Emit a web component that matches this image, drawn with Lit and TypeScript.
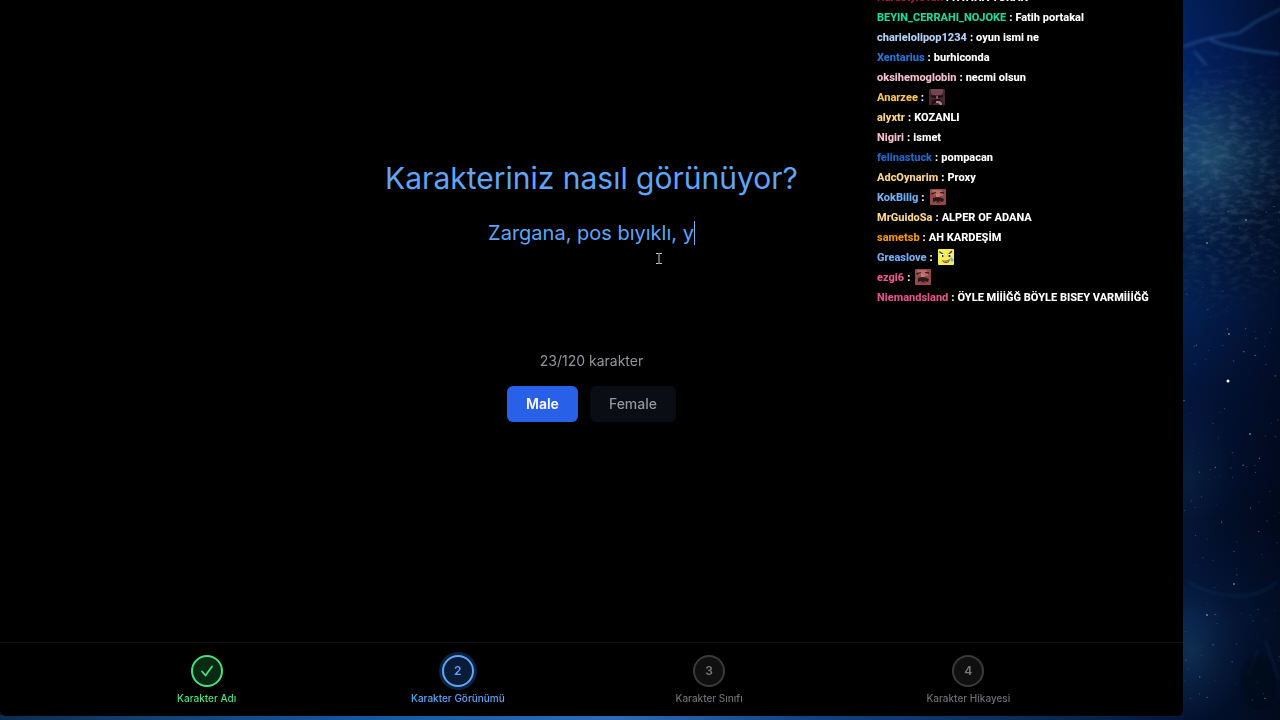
import { LitElement, html, css, svg } from "lit";
import { customElement, property, state } from "lit/decorators.js";

type Emote = "shade" | "moustache" | "grin";
interface Message { name: string; color: string; text?: string; emote?: Emote; }

const MESSAGES: Message[] = [
  { name: "HardstyleTan", color: "#a01c3c", text: "FATİHA TURAN" },
  { name: "BEYIN_CERRAHI_NOJOKE", color: "#1fd99a", text: "Fatih portakal" },
  { name: "charielolipop1234", color: "#b4d2fa", text: "oyun ismi ne" },
  { name: "Xentarius", color: "#2b74d8", text: "burhiconda" },
  { name: "oksihemoglobin", color: "#f7bfd3", text: "necmi olsun" },
  { name: "Anarzee", color: "#f9c45c", emote: "shade" },
  { name: "alyxtr", color: "#fbd58c", text: "KOZANLI" },
  { name: "Nigiri", color: "#f7bfd3", text: "ismet" },
  { name: "felinastuck", color: "#2468cc", text: "pompacan" },
  { name: "AdcOynarim", color: "#fbd58c", text: "Proxy" },
  { name: "KokBilig", color: "#76aef5", emote: "moustache" },
  { name: "MrGuidoSa", color: "#fbd58c", text: "ALPER OF ADANA" },
  { name: "sametsb", color: "#f0980e", text: "AH KARDEŞİM" },
  { name: "Greaslove", color: "#76aef5", emote: "grin" },
  { name: "ezgi6", color: "#e85c8c", emote: "moustache" },
  { name: "Niemandsland", color: "#e0558a", text: "ÖYLE MİİİĞĞ BÖYLE BISEY VARMİİİĞĞ" },
];

const EMOTES = {
  shade: svg`
    <rect width="16" height="16" rx="1" fill="#4a2833"/>
    <path d="M2 0h12v4l-2 2H4L2 4z" fill="#744450"/>
    <path d="M2 6l5 1 1 1 1-1 5-1v2l-4 1H6L2 8z" fill="#1c1016"/>
    <path d="M7 7h2v3H7z" fill="#8a5560"/>
    <path d="M3 11l4-1h3l3 2 1 4h-3l-2-2H6l-2 2H2z" fill="#211318"/>
    <path d="M7 12h4l2 2v2h-2l-2-2H7z" fill="#a58088"/>`,
  moustache: svg`
    <rect width="16" height="16" rx="1" fill="#93484a"/>
    <path d="M2 1h9l3 4-2 2H9L7 5 3 6z" fill="#b86b66"/>
    <path d="M1 4l5-1v1L2 6zM10 3h4v2l-4-1z" fill="#40201f"/>
    <path d="M6 5h3l1 4H6z" fill="#c47d72"/>
    <path d="M3 9q3-1 5-1t6 2l-1 3-3-1-2 1-2-1-3 1z" fill="#2b1718"/>
    <path d="M6 13h5v1H6z" fill="#6e2d32"/>`,
  grin: svg`
    <rect width="16" height="16" rx="1" fill="#f8ee5a"/>
    <path d="M1 3h1l4 3M14 2l-4 4" fill="none" stroke="#353018" stroke-width="1.2"/>
    <path d="M2 5h4v3H3zM10 5h4l-1 3h-3z" fill="#fff"/>
    <path d="M4 6h1.500v2H4zM10.500 6h2v2h-2z" fill="#353018"/>
    <path d="M4 11q4 2 8-1l-1 3q-3 2-6 0z" fill="#7b4828"/>
    <path d="M5 11.500q3 1.500 6 0l-1 1H6z" fill="#fff"/>
    <path d="M13 8l3 3-2 2-2-2z" fill="#65b9c9"/>`,
};

@customElement("night-sky")
export class NightSky extends LitElement {
  static styles = css`
    :host { display: block; overflow: hidden; }
    .sky { display: block; width: 100%; height: 100%; }
  `;
  render() {
    const stars: [number, number, number, number][] = [];
    let seed = 41;
    const next = () => (seed = (seed * 16807) % 2147483647) / 2147483647;
    for (let i = 0; i < 150; i++) {
      stars.push([1184 + next() * 96, 200 + next() * 510, 0.3 + next() * 0.4, 0.2 + next() * 0.45]);
    }
    return html`<svg class="sky" viewBox="0 0 1280 720" preserveAspectRatio="xMaxYMax slice" aria-hidden="true">
      <defs>
        <linearGradient id="night" x2="0" y2="1">
          <stop offset="0" stop-color="#03205c"/><stop offset=".1" stop-color="#032468"/>
          <stop offset=".22" stop-color="#0a2f62"/><stop offset=".3" stop-color="#062048"/>
          <stop offset=".43" stop-color="#042054"/><stop offset=".54" stop-color="#03163e"/>
          <stop offset=".72" stop-color="#02102f"/><stop offset=".86" stop-color="#051c44"/>
          <stop offset="1" stop-color="#031230"/>
        </linearGradient>
        <linearGradient id="dusk"><stop offset="0" stop-color="#00020c" stop-opacity="0"/><stop offset="1" stop-color="#00020c" stop-opacity=".55"/></linearGradient>
        <linearGradient id="rim">
          <stop offset="0" stop-color="#0c2c4e"/><stop offset=".12" stop-color="#134070"/>
          <stop offset=".3" stop-color="#1556a0"/><stop offset=".52" stop-color="#2c6cb8"/>
          <stop offset=".68" stop-color="#124384"/><stop offset=".85" stop-color="#0b2f5c"/>
          <stop offset="1" stop-color="#04163a"/>
        </linearGradient>
        <radialGradient id="glow"><stop offset="0" stop-color="#2d6585" stop-opacity=".75"/><stop offset="1" stop-color="#1a4c80" stop-opacity="0"/></radialGradient>
        <radialGradient id="fade"><stop offset=".3" stop-color="#fff"/><stop offset="1" stop-color="#fff" stop-opacity="0"/></radialGradient>
        <mask id="cloud"><ellipse cx="1225" cy="180" rx="100" ry="150" fill="url(#fade)"/></mask>
        <filter id="soft" x="-50%" y="-50%" width="200%" height="200%"><feGaussianBlur stdDeviation="1.500"/></filter>
        <filter id="dust"><feTurbulence type="fractalNoise" baseFrequency=".1 .2" numOctaves="5" seed="8"/><feColorMatrix values="0 0 0 0 .3  0 0 0 0 .5  0 0 0 0 .65  1.6 0 0 0 -.65"/></filter>
      </defs>
      <rect width="1280" height="720" fill="url(#night)"/>
      <ellipse cx="1216" cy="155" rx="75" ry="85" fill="url(#glow)"/>
      <ellipse cx="1192" cy="650" rx="55" ry="70" fill="url(#glow)" opacity=".4"/>
      <ellipse cx="1190" cy="480" rx="55" ry="80" fill="url(#glow)" opacity=".2"/>
      <rect x="1183" width="97" height="720" fill="url(#dusk)"/>
      <g mask="url(#cloud)"><rect x="1183" y="20" width="97" height="320" filter="url(#dust)" opacity=".25"/></g>
      <g filter="url(#soft)" fill="none" stroke="#3166a5" stroke-width="2.500" opacity=".5">
        <path d="M1183 47q15-6 28-9t28-5l18-12 24-12M1194 51l12 14M1210 40q25 10 70 14"/>
        <path d="M1190 583q20 12 45 13t42-14M1265 640l14 40M1248 675l10-25" opacity=".3"/>
      </g>
      <ellipse cx="1258" cy="682" rx="16" ry="26" fill="#010715" opacity=".6" filter="url(#soft)"/>
      ${stars.map(([x, y, r, o]) => svg`<circle cx=${x} cy=${y} r=${r} fill="#8fbbeb" opacity=${o}/>`)}
      ${[[1246, 220], [1207, 243], [1229, 334], [1250, 434], [1234, 584], [1207, 615]].map(([x, y]) => svg`<circle cx=${x} cy=${y} r=".8" fill="#a8cdf1"/>`)}
      <circle cx="1228" cy="381" r="1.500" fill="#fff"/>
      <rect y="715" width="1184" height="5" fill="url(#rim)"/>
    </svg>`;
  }
}

@customElement("chat-feed")
export class ChatFeed extends LitElement {
  static styles = css`
    :host { display: block; font: 800 11px/20px Roboto, "Liberation Sans", sans-serif; color: #fff; }
    .feed { list-style: none; margin: 0; padding: 0; }
    .message { display: flex; gap: 3px; height: 20px; white-space: pre; }
    .emote { width: 16px; height: 16px; margin: 1px 0 0 2px; }
  `;
  render() {
    return html`<ul class="feed">${MESSAGES.map((m) => html`<li class="message">
      <span style="color:${m.color}">${m.name}</span><span>:</span>${m.emote
        ? html`<svg class="emote" viewBox="0 0 16 16" role="img" aria-label=${m.emote}>${EMOTES[m.emote]}</svg>`
        : html`<span>${m.text}</span>`}</li>`)}</ul>`;
  }
}

@customElement("step-item")
export class StepItem extends LitElement {
  @property() label = "";
  @property({ type: Number }) number = 1;
  @property() status: "done" | "current" | "todo" = "todo";
  static styles = css`
    :host { display: block; }
    .step { display: flex; flex-direction: column; align-items: center; gap: 4px; font-size: 10px; line-height: 14px; font-weight: 500; white-space: nowrap; }
    .disc { box-sizing: border-box; width: 32px; height: 32px; border: 2px solid; border-radius: 50%; display: grid; place-items: center; font-size: 12px; font-weight: 600; }
    .tick { width: 16px; height: 16px; }
    .done { color: #4ade80; }
    .done .disc { background: #082a14; }
    .current { color: #60a5fa; }
    .current .disc { background: #0a1c38; box-shadow: 0 0 0 3px #0d233b; }
    .todo { color: #6b6e74; }
    .todo .disc { color: #77797d; border-color: #3a3a3a; background: #101010; }
  `;
  render() {
    return html`<div class="step ${this.status}" aria-current=${this.status === "current" ? "step" : "false"}>
      <span class="disc">${this.status === "done"
        ? html`<svg class="tick" viewBox="0 0 16 16" fill="none" stroke="currentColor" stroke-width="1.8" stroke-linecap="round" stroke-linejoin="round"><path d="M3 8.500l3.500 4L13 3.500"/></svg>`
        : this.number}</span>
      <span>${this.label}</span>
    </div>`;
  }
}

@customElement("app-root")
export class AppRoot extends LitElement {
  @state() private gender = "Male";
  static styles = css`
    :host { display: block; position: relative; min-height: 100vh; font-family: Inter, "Liberation Sans", sans-serif; }
    .backdrop { position: absolute; inset: 0; }
    .desktop { box-sizing: border-box; position: relative; min-height: 100vh; padding: 0 97px 4px 0; display: grid; overflow: hidden; }
    .window { display: flex; flex-direction: column; background: #000; border-radius: 0 0 6px 6px; position: relative; }
    .main { flex: 1; display: flex; flex-direction: column; align-items: center; padding-top: 158px; }
    .title { margin: 0; font-size: 30px; line-height: 40px; font-weight: 400; color: #60a5fa; }
    .entry { display: flex; justify-content: center; align-items: center; margin-top: 19px; height: 32px; }
    .answer { field-sizing: content; font: 400 20px/32px Inter, "Liberation Sans", sans-serif; color: #60a5fa; background: none; border: 0; outline: 0; padding: 0; margin: 0; }
    .caret { width: 1px; height: 24px; background: #78aef0; }
    .count { margin: 102px 0 0; font-size: 14px; line-height: 20px; color: #94969b; }
    .choices { display: flex; gap: 12px; margin-top: 15px; }
    .choice { font: 500 14px/20px Inter, "Liberation Sans", sans-serif; border: 0; border-radius: 6px; padding: 8px 19px; color: #9295a0; background: #0a0d13; cursor: pointer; }
    .choice.selected { color: #fff; background: #2860e8; font-weight: 600; }
    .steps { display: grid; grid-template-columns: 251fr 251fr 251fr 267fr; padding: 12px 81px 11px; border-top: 1px solid #111; }
    .chat { position: absolute; top: -12px; left: 877px; }
    .pointer { position: absolute; left: 655px; top: 252px; width: 8px; height: 13px; }
  `;
  render() {
    return html`
      <night-sky class="backdrop"></night-sky>
      <div class="desktop">
        <div class="window">
          <main class="main">
            <h1 class="title" id="question">Karakteriniz nasıl görünüyor?</h1>
            <div class="entry">
              <input class="answer" type="text" maxlength="120" aria-labelledby="question" .value=${"Zargana, pos bıyıklı, y"}>
              <span class="caret"></span>
            </div>
            <p class="count">23/120 karakter</p>
            <div class="choices">
              ${["Male", "Female"].map((g) => html`<button class="choice ${this.gender === g ? "selected" : ""}" aria-pressed=${this.gender === g} @click=${() => (this.gender = g)}>${g}</button>`)}
            </div>
          </main>
          <nav class="steps">
            <step-item label="Karakter Adı" number="1" status="done"></step-item>
            <step-item label="Karakter Görünümü" number="2" status="current"></step-item>
            <step-item label="Karakter Sınıfı" number="3"></step-item>
            <step-item label="Karakter Hikayesi" number="4"></step-item>
          </nav>
          <chat-feed class="chat"></chat-feed>
          <svg class="pointer" viewBox="0 0 8 13" fill="none" stroke="#c9c9c9" aria-hidden="true"><path d="M1 1.500h2.500L4 2l.5-.5H7M4 2v9M1 11.500h2.500L4 11l.5.5H7"/></svg>
        </div>
      </div>`;
  }
}
